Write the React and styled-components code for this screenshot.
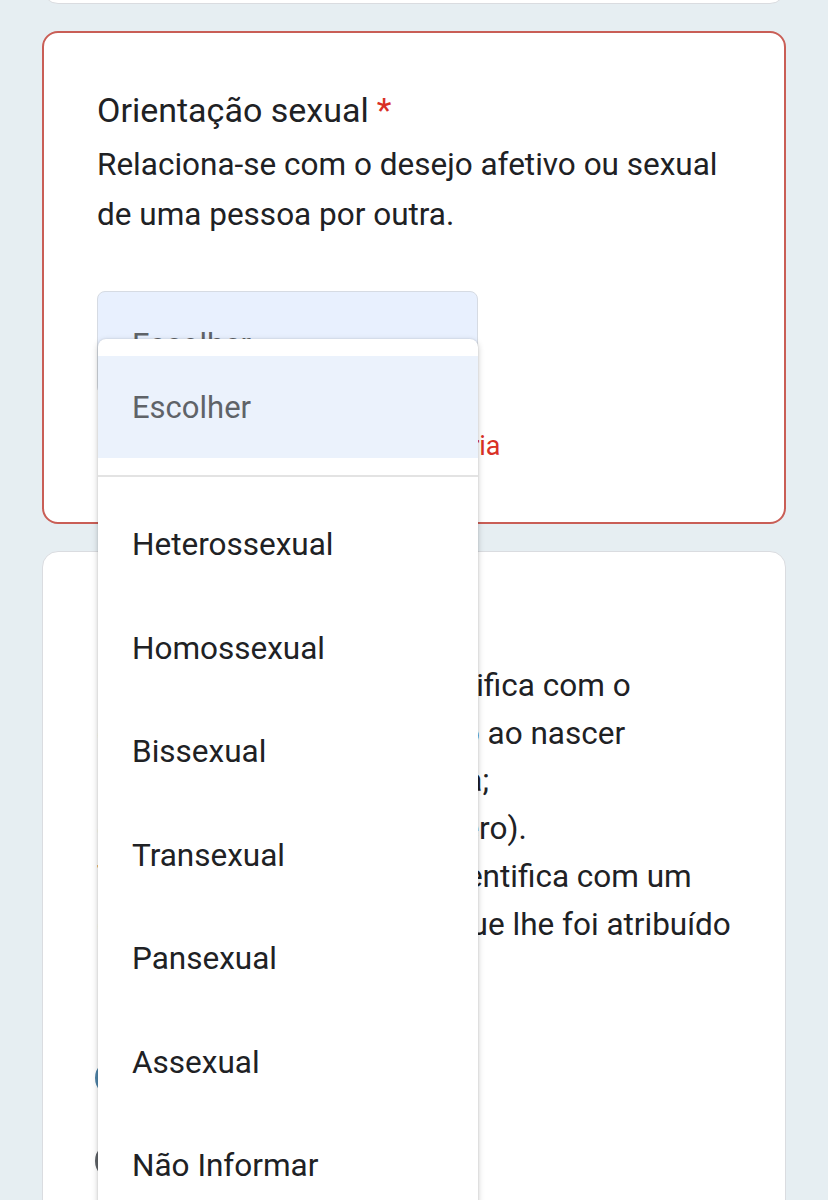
import React from "react";
import styled, { createGlobalStyle } from "styled-components";

const Global = createGlobalStyle`
  html, body {
    margin: 0;
    padding: 0;
    background: #e6eef2;
    font-family: Roboto, "Noto Sans", Arial, sans-serif;
    color: #202124;
  }
`;

const Page = styled.div`
  width: 828px;
  height: 1200px;
  overflow: hidden;
  display: flex;
  flex-direction: column;
  align-items: center;
  gap: 27px;
  box-sizing: border-box;
`;

const Card = styled.div`
  position: relative;
  width: 744px;
  box-sizing: border-box;
  background: #fff;
  border-radius: 16px;
  border: ${(p) => (p.$error ? "2px solid #c95e56" : "1px solid #dadce0")};
  padding: ${(p) => (p.$error ? "57px 53px 58px" : "58px 54px 59px")};
  flex-shrink: 0;
`;

const TopCard = styled(Card)`
  height: 204px;
  margin-top: -200px;
  padding: 0;
`;

const Title = styled.div`
  font-size: 34px;
  line-height: 40px;
`;

const Star = styled.span`
  color: #d93025;
  margin-left: 8px;
`;

const Desc = styled.div`
  margin-top: ${(p) => p.$top || "10px"};
  font-size: 31.5px;
  line-height: ${(p) => p.$lh || "50px"};
  white-space: nowrap;
`;

const Line = styled.div``;

const SelectWrap = styled.div`
  position: relative;
  margin-top: 51px;
  width: 381px;
  z-index: 5;
`;

const SelectBox = styled.div`
  height: 104px;
  box-sizing: border-box;
  background: #e8f0fe;
  border: 1px solid #d6dbe3;
  border-radius: 8px;
  padding: 34px 34px 0;
  font-size: 31px;
  color: #5f6368;
`;

const Menu = styled.div`
  position: absolute;
  left: 1px;
  top: 48px;
  width: 380px;
  height: 900px;
  background: #fff;
  border-radius: 8px 8px 0 0;
  box-shadow: 0 2px 6px rgba(0, 0, 0, 0.22), 0 0 2px rgba(0, 0, 0, 0.12);
  padding-top: 17px;
  box-sizing: border-box;
`;

const Option = styled.div`
  height: ${(p) => p.$h || "103.5px"};
  display: flex;
  align-items: center;
  padding-left: 34px;
  font-size: ${(p) => (p.$placeholder ? "31px" : "31.5px")};
  color: ${(p) => (p.$placeholder ? "#5f6368" : "#202124")};
  background: ${(p) => (p.$active ? "#ebf2fc" : "transparent")};
`;

const Divider = styled.div`
  margin-top: 17px;
  height: 2px;
  background: #e3e3e3;
  margin-bottom: 16px;
`;

const ErrorRow = styled.div`
  margin-top: 33px;
  display: flex;
  align-items: center;
  gap: 25px;
  height: 36px;
  font-size: 27px;
  color: #d93025;
`;

const RadioList = styled.div`
  margin-top: 62px;
  display: flex;
  flex-direction: column;
  gap: 43px;
`;

const RadioRow = styled.div`
  display: flex;
  align-items: center;
  gap: 28px;
  font-size: 31px;
  height: 40px;
`;

const Circle = styled.div`
  width: 38px;
  height: 38px;
  box-sizing: border-box;
  border-radius: 50%;
  border: 3px solid ${(p) => (p.$blue ? "#4f84a8" : "#5f6368")};
  margin-left: -2px;
`;

const options = [
  "Heterossexual",
  "Homossexual",
  "Bissexual",
  "Transexual",
  "Pansexual",
  "Assexual",
  "Não Informar",
];

const ErrorIcon = () => (
  <svg width="54" height="54" viewBox="0 0 24 24" fill="#d93025">
    <path d="M12 2C6.48 2 2 6.48 2 12s4.48 10 10 10 10-4.48 10-10S17.52 2 12 2zm1 15h-2v-2h2v2zm0-4h-2V7h2v6z" />
  </svg>
);

export default function App() {
  return (
    <>
      <Global />
      <Page>
        <TopCard />
        <Card $error>
          <Title>
            Orientação sexual<Star>*</Star>
          </Title>
          <Desc>
            <Line>Relaciona-se com o desejo afetivo ou sexual</Line>
            <Line>de uma pessoa por outra.</Line>
          </Desc>
          <SelectWrap>
            <SelectBox>Escolher</SelectBox>
            <Menu>
              <Option $active $placeholder $h="102px">
                Escolher
              </Option>
              <Divider />
              {options.map((o) => (
                <Option key={o}>{o}</Option>
              ))}
            </Menu>
          </SelectWrap>
          <ErrorRow>
            <ErrorIcon />
            Esta pergunta é obrigatória
          </ErrorRow>
        </Card>
        <Card>
          <Title>
            Identidade de gênero<Star>*</Star>
          </Title>
          <Desc $top="12px" $lh="47.7px">
            <Line>Cisgênero: é quem se identifica com o</Line>
            <Line>gênero que lhe foi atribuído ao nascer</Line>
            <Line>(de acordo com a anatomia;</Line>
            <Line>ex: homem/mulher cisgênero).</Line>
            <Line>Transgênero: é quem se identifica com um</Line>
            <Line>gênero diferente daquele que lhe foi atribuído</Line>
            <Line>ao nascer.</Line>
          </Desc>
          <RadioList>
            <RadioRow>
              <Circle $blue />
              Cisgênero
            </RadioRow>
            <RadioRow>
              <Circle />
              Transgênero
            </RadioRow>
            <RadioRow>
              <Circle />
              Não-binário
            </RadioRow>
          </RadioList>
        </Card>
      </Page>
    </>
  );
}
